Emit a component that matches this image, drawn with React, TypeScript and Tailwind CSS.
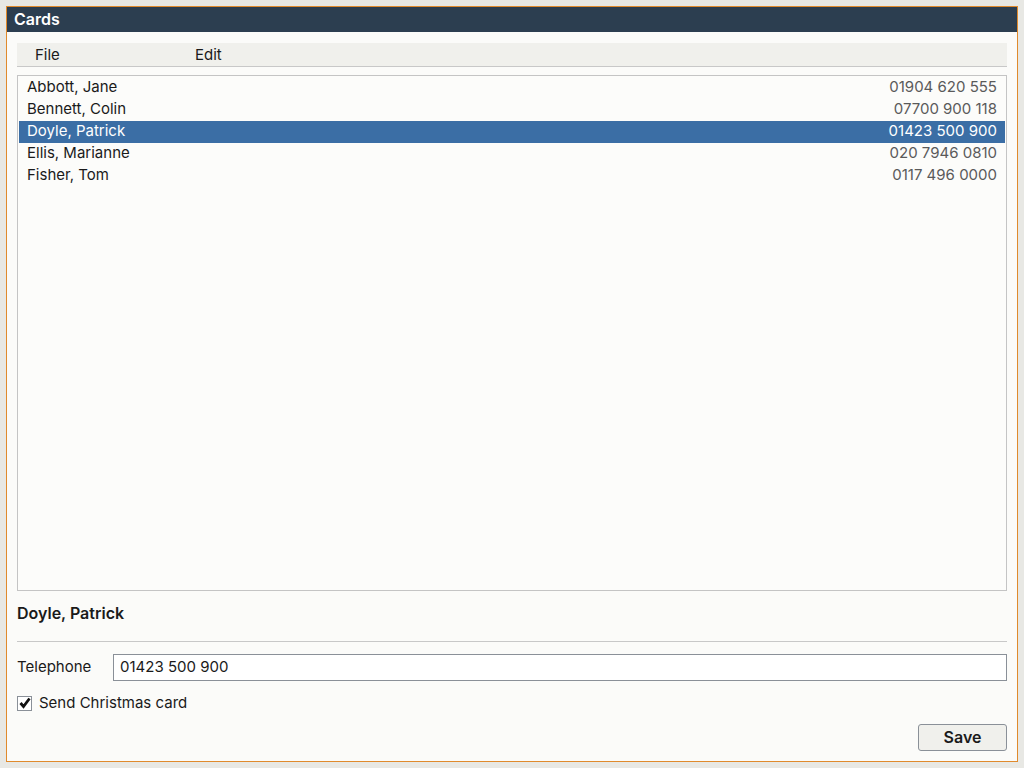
import React from 'react'

const people = [
  { name: 'Abbott, Jane', phone: '01904 620 555' },
  { name: 'Bennett, Colin', phone: '07700 900 118' },
  { name: 'Doyle, Patrick', phone: '01423 500 900' },
  { name: 'Ellis, Marianne', phone: '020 7946 0810' },
  { name: 'Fisher, Tom', phone: '0117 496 0000' },
]

export default function App() {
  const selected = 2
  return (
    <div
      className="h-[768px] w-[1024px] bg-[#e8e8e4] p-[6px]"
      style={{ fontFamily: 'Inter, "Noto Sans", sans-serif' }}
    >
      <div className="flex h-[756px] w-[1012px] flex-col border border-[#e08a2c] bg-[#fbfbf9]">
        <div className="flex h-[25px] items-center bg-[#2c3e50] px-[7px] pb-px text-[16px] font-semibold text-white">
          Cards
        </div>
        <div className="flex flex-1 flex-col px-[10px] pt-[11px] pb-[10px]">
          <div className="flex h-[24px] items-center border-b border-[#c8c8c8] bg-[#f0f0ec] pt-px text-[15px] text-[#1a1a1a]">
            <span className="ml-[18px] w-[160px]">File</span>
            <span>Edit</span>
          </div>
          <div className="mt-[8px] flex-1 border border-[#c4c4c4] bg-[#fcfcfa] p-px">
            {people.map((p, i) => (
              <div
                key={p.name}
                className={
                  i === selected
                    ? 'flex h-[22px] items-center justify-between bg-[#3b6ea5] px-[8px] pb-[2px] text-[15px] text-white'
                    : 'flex h-[22px] items-center justify-between px-[8px] pb-[2px] text-[15px] text-[#1a1a1a]'
                }
              >
                <span>{p.name}</span>
                <span className={i === selected ? 'text-white' : 'text-[#5a5a5a]'}>{p.phone}</span>
              </div>
            ))}
          </div>
          <div className="mt-[11px] h-[22px] text-[16px] font-semibold leading-[22px] text-[#1a1a1a]">
            Doyle, Patrick
          </div>
          <div className="mt-[17px] border-t border-[#c8c8c8]" />
          <div className="mt-[12px] flex items-center text-[15px] text-[#1a1a1a]">
            <span className="w-[96px]">Telephone</span>
            <div className="flex h-[27px] flex-1 items-center border border-[#8a9098] bg-white px-[6px] pb-px">
              01423 500 900
            </div>
          </div>
          <label className="mt-[9px] flex h-[26px] items-center gap-[7px] text-[15px] text-[#1a1a1a]">
            <span className="flex h-[15px] w-[15px] items-center justify-center border border-[#8a9098] bg-white">
              <svg viewBox="0 0 12 12" className="h-[12px] w-[12px]">
                <path d="M1.5 6 L4.5 9.5 L10.5 1.5" fill="none" stroke="#111" strokeWidth="2.8" />
              </svg>
            </span>
            Send Christmas card
          </label>
          <div className="mt-[8px] flex justify-end">
            <button className="h-[27px] w-[89px] rounded-[3px] border border-[#8a9098] bg-[#f0f0ec] pb-px text-[16px] font-semibold text-[#1a1a1a]">
              Save
            </button>
          </div>
        </div>
      </div>
    </div>
  )
}
